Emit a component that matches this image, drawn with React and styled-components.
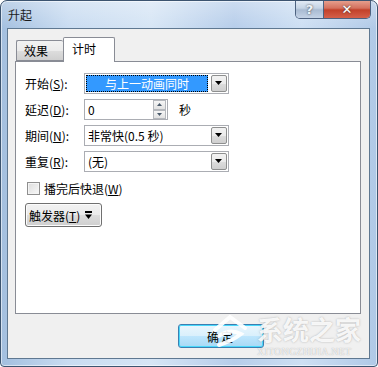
import React from "react";
import styled, { createGlobalStyle } from "styled-components";

const Global = createGlobalStyle`
  html, body { margin: 0; padding: 0; background: #fff; }
  body { font-family: "Noto Sans CJK SC", "Noto Sans", sans-serif; font-size: 12px; color: #000; }
`;

const Window = styled.div`
  position: relative;
  box-sizing: border-box;
  width: 378px;
  height: 367px;
  border: 1px solid #3c5470;
  border-radius: 7px 7px 4px 4px;
  background:
    linear-gradient(180deg, rgba(255,255,255,0.3) 0%, rgba(255,255,255,0) 28px),
    linear-gradient(90deg, #a3bfdf 0%, #c9dcf1 18%, #d6e5f5 40%, #b6cdea 62%, #cddff3 80%, #b0c9e7 100%);
  box-shadow: inset 0 0 0 1px rgba(255,255,255,0.55);
  display: flex;
  flex-direction: column;
  overflow: hidden;
`;

const TitleBar = styled.div`
  height: 27px;
  display: flex;
  align-items: flex-start;
  padding-left: 7px;
`;

const Title = styled.div`
  margin-top: 5px;
  font-size: 12px;
  color: #1b1b1b;
  flex: 1;
`;

const Caption = styled.div`
  display: flex;
  margin-right: 6px;
  margin-top: -1px;
  border: 1px solid #4d6280;
  border-top: none;
  border-radius: 0 0 5px 5px;
  overflow: hidden;
`;

const CapBtn = styled.div`
  width: ${p => p.$w}px;
  height: 18px;
  display: flex;
  align-items: center;
  justify-content: center;
  font-family: "DejaVu Sans", sans-serif;
  font-weight: bold;
  font-size: ${p => p.$fs}px;
  text-shadow: 0 0 2px #333;
  background: ${p => p.$red
    ? "linear-gradient(180deg, #e8a493 0%, #d4715e 45%, #c2412a 55%, #d5604a 100%)"
    : "linear-gradient(180deg, #e5edf6 0%, #c5d4e5 45%, #a9bbd2 55%, #c4d3e6 100%)"};
  border-left: ${p => p.$red ? "1px solid #4d6280" : "none"};
  color: ${p => p.$red ? "#fff" : "#eef3f9"};
`;

const Client = styled.div`
  flex: 1;
  margin: 0 7px 7px 6px;
  border: 1px solid #5f7891;
  background: #f0f0f0;
  display: flex;
  flex-direction: column;
`;

const TabStrip = styled.div`
  display: flex;
  align-items: flex-end;
  padding: 7px 0 0 8px;
  height: 25px;
  box-sizing: content-box;
`;

const Tab = styled.div`
  box-sizing: border-box;
  height: ${p => p.$active ? 25 : 21}px;
  width: ${p => p.$active ? 52 : 47}px;
  margin-bottom: ${p => p.$active ? -1 : 0}px;
  border: 1px solid #898c95;
  border-bottom: ${p => p.$active ? "none" : "1px solid #898c95"};
  ${p => !p.$active && "border-right: none;"}
  border-radius: 2px 2px 0 0;
  background: ${p => p.$active ? "#fff" : "linear-gradient(180deg, #f2f2f2 0%, #ebebeb 50%, #dddddd 51%, #cfcfcf 100%)"};
  padding-left: ${p => p.$active ? 8 : 7}px;
  padding-top: ${p => p.$active ? 2 : 1}px;
  position: relative;
  z-index: ${p => p.$active ? 1 : 0};
`;

const Panel = styled.div`
  margin: 0 8px 0 7px;
  height: 253px;
  box-sizing: border-box;
  border: 1px solid #898c95;
  background: #fff;
  padding: 11px 0 0 9px;
  display: flex;
  flex-direction: column;
`;

const Form = styled.div`
  display: grid;
  grid-template-columns: 59px auto 1fr;
  grid-auto-rows: 21px;
  row-gap: 5px;
  align-items: center;
`;

const Label = styled.div`
  white-space: nowrap;
`;

const U = styled.span`
  text-decoration: underline;
  text-underline-offset: 1px;
`;

const Combo = styled.div`
  box-sizing: border-box;
  width: 145px;
  height: 21px;
  border: 1px solid #abadb3;
  display: flex;
  align-items: stretch;
  background: #fff;
  grid-column: span 2;
`;

const ComboText = styled.div`
  flex: 1;
  display: flex;
  align-items: center;
  justify-content: ${p => p.$sel ? "center" : "flex-start"};
  padding-left: ${p => p.$sel ? 0 : 3}px;
  margin: ${p => p.$sel ? "1px 2px 1px 1px" : "0"};
  background: ${p => p.$sel ? "#3399ff" : "transparent"};
  color: ${p => p.$sel ? "#fff" : "#000"};
  outline: ${p => p.$sel ? "1px dotted #000" : "none"};
  outline-offset: -1px;
  white-space: nowrap;
`;

const ArrowBtn = styled.div`
  width: 16px;
  margin: 1px;
  box-sizing: border-box;
  border: 1px solid #8e8f8f;
  border-radius: 2px;
  background: linear-gradient(180deg, #f2f2f2 0%, #ebebeb 50%, #dddddd 51%, #cfcfcf 100%);
  display: flex;
  align-items: center;
  justify-content: center;
`;

const Spin = styled.div`
  display: flex;
  align-items: center;
  grid-column: span 2;
  gap: 11px;
`;

const Edit = styled.div`
  box-sizing: border-box;
  width: 84px;
  height: 21px;
  border: 1px solid #abadb3;
  display: flex;
  align-items: stretch;
  background: #fff;
`;

const EditText = styled.div`
  flex: 1;
  padding-left: 3px;
  display: flex;
  align-items: center;
`;

const SpinBtns = styled.div`
  width: 13px;
  margin: 0 1px 0 0;
  display: flex;
  flex-direction: column;
`;

const SpinBtn = styled.div`
  flex: 1;
  box-sizing: border-box;
  border: 1px solid #b5b8bd;
  background: linear-gradient(180deg, #f6f6f6, #e2e2e2);
  display: flex;
  align-items: center;
  justify-content: center;
`;

const CheckRow = styled.div`
  display: flex;
  align-items: center;
  gap: 4px;
  margin: 6px 0 0 2px;
  height: 20px;
`;

const Box = styled.div`
  box-sizing: border-box;
  width: 13px;
  height: 13px;
  border: 1px solid #8f8f8f;
  background: linear-gradient(135deg, #dcdcdc, #f8f8f8);
  box-shadow: inset 0 0 0 1px #f4f4f4;
`;

const TriggerBtn = styled.div`
  margin-top: 5px;
  box-sizing: border-box;
  width: 77px;
  height: 24px;
  border: 1px solid #707070;
  border-radius: 3px;
  background: linear-gradient(180deg, #f2f2f2 0%, #ebebeb 50%, #dddddd 51%, #cfcfcf 100%);
  box-shadow: inset 0 0 0 1px #fcfcfc;
  display: flex;
  align-items: center;
  padding-left: 3px;
  gap: 5px;
`;

const Footer = styled.div`
  flex: 1;
  display: flex;
  align-items: center;
  padding-left: 170px;
`;

const OkBtn = styled.div`
  box-sizing: border-box;
  width: 86px;
  height: 24px;
  border: 1px solid #3c7fb1;
  border-radius: 3px;
  background: linear-gradient(180deg, #eaf6fd 0%, #d9f0fc 50%, #bee6fd 51%, #a7d9f5 100%);
  box-shadow: inset 0 0 0 1px #48d8fb;
  display: flex;
  align-items: center;
  justify-content: center;
  letter-spacing: 2px;
`;

const Watermark = styled.div`
  position: absolute;
  left: 210px;
  top: 312px;
  display: flex;
  align-items: flex-start;
  gap: 8px;
  pointer-events: none;
`;

const WmText = styled.div`
  display: flex;
  flex-direction: column;
  align-items: flex-start;
`;

const WmBig = styled.div`
  font-size: 26px;
  font-weight: bold;
  color: rgba(255,255,255,0.9);
  text-shadow: 0 0 2px rgba(120,120,120,0.55);
  letter-spacing: 0;
  line-height: 32px;
`;

const WmSmall = styled.div`
  font-family: "Liberation Serif", serif;
  font-size: 10px;
  color: rgba(255,255,255,0.85);
  text-shadow: 0 0 1px rgba(100,100,100,0.6);
  margin-top: 1px;
  letter-spacing: 0.2px;
`;

const Down = () => (
  <svg width="8" height="5" viewBox="0 0 8 5"><path d="M0 0h7L3.5 4z" fill="#000" /></svg>
);

const Tiny = ({ up }) => (
  <svg width="5" height="3" viewBox="0 0 5 3">
    <path d={up ? "M0 3h5L2.5 0z" : "M0 0h5L2.5 3z"} fill="#4a5a6b" />
  </svg>
);

const Row = ({ label, acc, children }) => (
  <>
    <Label>{label}(<U>{acc}</U>):</Label>
    {children}
  </>
);

export default function App() {
  return (
    <>
      <Global />
      <Window>
        <TitleBar>
          <Title>升起</Title>
          <Caption>
            <CapBtn $w={27} $fs={13}>?</CapBtn>
            <CapBtn $w={46} $fs={13} $red>✕</CapBtn>
          </Caption>
        </TitleBar>
        <Client>
          <TabStrip>
            <Tab>效果</Tab>
            <Tab $active>计时</Tab>
          </TabStrip>
          <Panel>
            <Form>
              <Row label="开始" acc="S">
                <Combo>
                  <ComboText $sel>与上一动画同时</ComboText>
                  <ArrowBtn><Down /></ArrowBtn>
                </Combo>
              </Row>
              <Row label="延迟" acc="D">
                <Spin>
                  <Edit>
                    <EditText>0</EditText>
                    <SpinBtns>
                      <SpinBtn><Tiny up /></SpinBtn>
                      <SpinBtn><Tiny /></SpinBtn>
                    </SpinBtns>
                  </Edit>
                  <span>秒</span>
                </Spin>
              </Row>
              <Row label="期间" acc="N">
                <Combo>
                  <ComboText>非常快(0.5 秒)</ComboText>
                  <ArrowBtn><Down /></ArrowBtn>
                </Combo>
              </Row>
              <Row label="重复" acc="R">
                <Combo>
                  <ComboText>(无)</ComboText>
                  <ArrowBtn><Down /></ArrowBtn>
                </Combo>
              </Row>
            </Form>
            <CheckRow>
              <Box />
              <span>播完后快退(<U>W</U>)</span>
            </CheckRow>
            <TriggerBtn>
              <span>触发器(<U>T</U>)</span>
              <svg width="8" height="9" viewBox="0 0 8 9">
                <rect x="0" y="0" width="7" height="2" fill="#000" />
                <path d="M0 3.5h7L3.5 8z" fill="#000" />
              </svg>
            </TriggerBtn>
          </Panel>
          <Footer>
            <OkBtn>确定</OkBtn>
          </Footer>
        </Client>
        <Watermark>
          <svg width="38" height="36" viewBox="0 0 38 36">
            <path d="M4 17 L19 4 L34 15" stroke="rgba(255,255,255,0.92)" strokeWidth="4" fill="none" strokeLinecap="round" />
            <path d="M8 23 Q19 15 30 21 Q21 28 8 32" stroke="rgba(255,255,255,0.92)" strokeWidth="4" fill="none" strokeLinecap="round" />
          </svg>
          <WmText>
            <WmBig>系统之家</WmBig>
            <WmSmall>XITONGZHIJIA.NET</WmSmall>
          </WmText>
        </Watermark>
      </Window>
    </>
  );
}
